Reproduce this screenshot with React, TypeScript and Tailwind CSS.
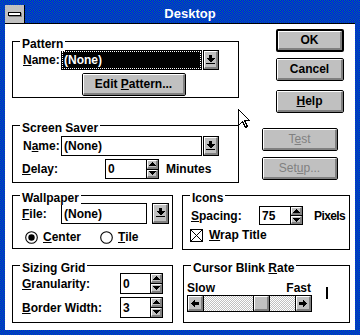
import React from "react";

const BLUE_DITHER =
  "bg-[image:conic-gradient(#0000ff_25%,#008080_0_50%,#0000ff_0_75%,#008080_0)] bg-[length:2px_2px]";
const GRAY_DITHER =
  "bg-[image:conic-gradient(#c0c0c0_25%,#ffffff_0_50%,#c0c0c0_0_75%,#ffffff_0)] bg-[length:2px_2px]";

function Bevel({ children, className = "" }: { children?: React.ReactNode; className?: string }) {
  return (
    <div
      className={`flex flex-1 items-center justify-center border-t border-l border-t-white border-l-white border-r-2 border-b-2 border-r-[#808080] border-b-[#808080] bg-[#c0c0c0] ${className}`}
    >
      {children}
    </div>
  );
}

function WinButton({
  className = "",
  children,
  isDefault = false,
  disabled = false,
}: {
  className?: string;
  children: React.ReactNode;
  isDefault?: boolean;
  disabled?: boolean;
}) {
  return (
    <div className={`flex rounded-[2px] border-black ${isDefault ? "border-2" : "border"} ${className}`}>
      <Bevel>
        <span className={disabled ? "text-[#808080] font-normal" : ""}>{children}</span>
      </Bevel>
    </div>
  );
}

function Group({
  label,
  className = "",
  children,
}: {
  label: React.ReactNode;
  className?: string;
  children?: React.ReactNode;
}) {
  return (
    <div className={`relative border border-black ${className}`}>
      <span className="absolute left-[7px] -top-[5px] bg-white px-[2px] leading-[14px] whitespace-nowrap">
        {label}
      </span>
      {children}
    </div>
  );
}

function DownArrowBar() {
  return (
    <svg width="9" height="10" viewBox="0 0 9 10" shapeRendering="crispEdges">
      <rect x="3" y="0" width="3" height="3" fill="black" />
      <polygon points="0,3 9,3 4.5,7.5" fill="black" />
      <rect x="0" y="8" width="9" height="1" fill="black" />
    </svg>
  );
}

function DropBtn({ className = "" }: { className?: string }) {
  return (
    <div className={`flex border border-black ${className}`}>
      <Bevel>
        <DownArrowBar />
      </Bevel>
    </div>
  );
}

function Combo({
  text,
  selected = false,
  className = "",
}: {
  text: string;
  selected?: boolean;
  className?: string;
}) {
  return (
    <div className={`flex ${className}`}>
      <div className={`flex flex-1 border border-black ${selected ? "bg-black" : "bg-white"}`}>
        {selected ? (
          <div className="flex flex-1 items-center border border-dotted border-white pl-[1px] text-white">
            {text}
          </div>
        ) : (
          <div className="flex flex-1 items-center pl-[2px]">{text}</div>
        )}
      </div>
      <DropBtn className="ml-[1px] w-[16px]" />
    </div>
  );
}

function Tri({ up }: { up: boolean }) {
  return (
    <svg width="7" height="4" viewBox="0 0 7 4" shapeRendering="crispEdges">
      <polygon points={up ? "3.5,0 7,4 0,4" : "0,0 7,0 3.5,4"} fill="black" />
    </svg>
  );
}

function SpinField({ value, className = "" }: { value: string; className?: string }) {
  return (
    <div className={`flex border border-black bg-white ${className}`}>
      <div className="flex flex-1 items-center pl-[2px]">{value}</div>
      <div className="flex w-[12px] flex-col border-l border-black">
        <div className="flex flex-1 border-b border-black">
          <Bevel className="border-r border-b">
            <Tri up />
          </Bevel>
        </div>
        <div className="flex flex-1">
          <Bevel className="border-r border-b">
            <Tri up={false} />
          </Bevel>
        </div>
      </div>
    </div>
  );
}

function Radio({ checked = false }: { checked?: boolean }) {
  return (
    <svg width="13" height="13" viewBox="0 0 13 13">
      <circle cx="6.5" cy="6.5" r="5.8" fill="white" stroke="black" strokeWidth="1.1" />
      {checked && <circle cx="6.5" cy="6.5" r="3.2" fill="black" />}
    </svg>
  );
}

function CheckX() {
  return (
    <svg width="13" height="13" viewBox="0 0 13 13" shapeRendering="crispEdges">
      <rect x="0.5" y="0.5" width="12" height="12" fill="white" stroke="black" />
      <line x1="1" y1="1" x2="12" y2="12" stroke="black" />
      <line x1="12" y1="1" x2="1" y2="12" stroke="black" />
    </svg>
  );
}

function HArrow({ left }: { left: boolean }) {
  return (
    <svg width="8" height="7" viewBox="0 0 8 7" shapeRendering="crispEdges">
      {left ? (
        <>
          <polygon points="0,3.5 4,0 4,7" fill="black" />
          <rect x="4" y="2" width="4" height="3" fill="black" />
        </>
      ) : (
        <>
          <polygon points="8,3.5 4,0 4,7" fill="black" />
          <rect x="0" y="2" width="4" height="3" fill="black" />
        </>
      )}
    </svg>
  );
}

export default function App() {
  return (
    <div
      className={`relative h-[335px] w-[360px] p-[5px] ${BLUE_DITHER} font-['Liberation_Sans',Arial,sans-serif] text-[12px] font-bold leading-[14px] text-black`}
    >
      <div className="flex h-full flex-col">
        {/* Title bar */}
        <div className="flex h-[19px] border-b border-black">
          <div className="flex w-[20px] items-center justify-center border-r border-black bg-[#c0c0c0]">
            <div className="h-[4px] w-[13px] border border-black bg-white shadow-[1px_1px_0_#808080]" />
          </div>
          <div className="flex flex-1 items-center justify-center text-[13px] text-white">Desktop</div>
        </div>

        {/* Body */}
        <div className="flex flex-1 flex-col bg-white pl-[7px]">
          {/* Row A */}
          <div className="flex h-[94px] items-start">
            <Group label="Pattern" className="mt-[17px] h-[57px] w-[227px]">
              <div className="ml-[10px] mt-[8px] flex items-center">
                <span className="w-[38px]">
                  <u>N</u>ame:
                </span>
                <Combo text="(None)" selected className="h-[20px] w-[158px]" />
              </div>
              <WinButton className="ml-[69px] mt-[3px] h-[23px] w-[104px]">
                Edit <u>P</u>attern...
              </WinButton>
            </Group>
            <div className="ml-[37px] mt-[5px] flex flex-col">
              <WinButton isDefault className="h-[23px] w-[68px]">
                OK
              </WinButton>
              <WinButton className="mt-[6px] h-[23px] w-[68px]">Cancel</WinButton>
              <WinButton className="mt-[9px] h-[23px] w-[68px]">
                <u>H</u>elp
              </WinButton>
            </div>
          </div>

          {/* Row B */}
          <div className="flex h-[70px] items-start">
            <Group label="Screen Saver" className="mt-[7px] h-[58px] w-[227px]">
              <div className="ml-[10px] mt-[10px] flex items-center">
                <span className="w-[38px]">
                  N<u>a</u>me:
                </span>
                <Combo text="(None)" className="h-[20px] w-[158px]" />
              </div>
              <div className="ml-[9px] mt-[3px] flex items-center">
                <span className="w-[83px]">
                  <u>D</u>elay:
                </span>
                <SpinField value="0" className="h-[20px] w-[54px]" />
                <span className="ml-[7px]">Minutes</span>
              </div>
            </Group>
            <div className="ml-[23px] mt-[10px] flex flex-col">
              <WinButton disabled className="h-[23px] w-[76px]">
                T<u>e</u>st
              </WinButton>
              <WinButton disabled className="mt-[6px] h-[23px] w-[76px]">
                Set<u>u</u>p...
              </WinButton>
            </div>
          </div>

          {/* Row C */}
          <div className="flex h-[70px] items-start">
            <Group label="Wallpaper" className="mt-[7px] h-[54px] w-[161px]">
              <div className="ml-[9px] mt-[7px] flex items-center">
                <span className="w-[39px]">
                  <u>F</u>ile:
                </span>
                <div className="flex h-[21px] w-[86px] items-center border border-black pl-[2px]">(None)</div>
                <DropBtn className="ml-[5px] h-[21px] w-[17px]" />
              </div>
              <div className="ml-[12px] mt-[6px] flex items-center">
                <Radio checked />
                <span className="ml-[5px] w-[57px]">
                  <u>C</u>enter
                </span>
                <Radio />
                <span className="ml-[5px]">
                  <u>T</u>ile
                </span>
              </div>
            </Group>
            <Group label="Icons" className="ml-[9px] mt-[7px] h-[55px] w-[168px]">
              <div className="ml-[8px] mt-[10px] flex items-center">
                <span className="w-[68px]">
                  <u>S</u>pacing:
                </span>
                <SpinField value="75" className="h-[19px] w-[44px]" />
                <span className="ml-[11px] tracking-[-0.6px]">Pixels</span>
              </div>
              <div className="ml-[7px] mt-[3px] flex items-center">
                <CheckX />
                <span className="ml-[6px]">
                  <u>W</u>rap Title
                </span>
              </div>
            </Group>
          </div>

          {/* Row D */}
          <div className="flex items-start">
            <Group label="Sizing Grid" className="mt-[7px] h-[58px] w-[161px]">
              <div className="ml-[9px] mt-[7px] flex items-center">
                <span className="w-[98px]">
                  <u>G</u>ranularity:
                </span>
                <SpinField value="0" className="h-[21px] w-[43px]" />
              </div>
              <div className="ml-[9px] mt-[3px] flex items-center">
                <span className="w-[98px]">
                  <u>B</u>order Width:
                </span>
                <SpinField value="3" className="h-[21px] w-[43px]" />
              </div>
            </Group>
            <Group
              label={
                <>
                  Cursor Blink <u>R</u>ate
                </>
              }
              className="ml-[10px] mt-[7px] h-[58px] w-[167px]"
            >
              <div className="ml-[3px] mt-[15px] flex items-start">
                <div className="flex w-[125px] flex-col">
                  <div className="flex h-[14px] justify-between pr-[1px]">
                    <span>Slow</span>
                    <span>Fast</span>
                  </div>
                  <div className="flex h-[17px] border border-black">
                    <div className="flex w-[16px] border-r border-black">
                      <Bevel>
                        <HArrow left />
                      </Bevel>
                    </div>
                    <div className={`flex flex-1 ${GRAY_DITHER}`}>
                      <div className="ml-[49px] flex w-[17px] border-x border-black">
                        <Bevel />
                      </div>
                    </div>
                    <div className="flex w-[16px] border-l border-black">
                      <Bevel>
                        <HArrow left={false} />
                      </Bevel>
                    </div>
                  </div>
                </div>
                <div className="ml-[14px] mt-[6px] h-[12px] w-[2px] bg-black" />
              </div>
            </Group>
          </div>
        </div>
      </div>

      {/* Mouse pointer */}
      <svg
        className="absolute left-[238px] top-[109px]"
        width="13"
        height="20"
        viewBox="0 0 13 20"
        shapeRendering="crispEdges"
      >
        <polygon
          points="0.5,0.5 0.5,16.5 4.5,12.5 7.5,18.5 9.5,17.5 6.5,11.5 11.5,11.5"
          fill="white"
          stroke="black"
          strokeWidth="1"
        />
      </svg>
    </div>
  );
}
